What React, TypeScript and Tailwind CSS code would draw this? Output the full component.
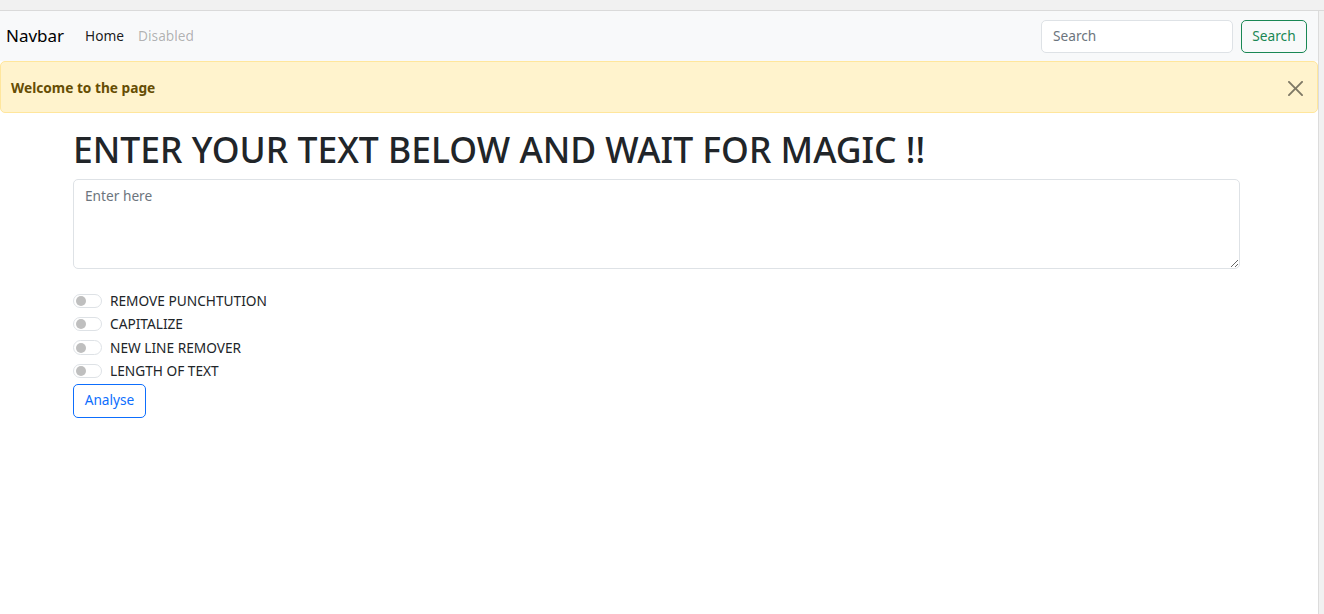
import React from "react";

const font = "font-['Segoe_UI','Noto_Sans',sans-serif]";

function Switch({ label }: { label: string }) {
  return (
    <div className="flex items-center h-[21.6px] mb-[1.8px]">
      <span className="relative w-[29px] h-[14.4px] rounded-full border border-[#dee2e6] bg-white shrink-0">
        <span className="absolute left-[2px] top-[1.2px] w-[10px] h-[10px] rounded-full bg-[#bfbfbf]" />
      </span>
      <span className="ml-[8px] text-[13.7px] text-[#212529] leading-[21.6px]">{label}</span>
    </div>
  );
}

export default function App() {
  return (
    <div className={`w-full h-screen flex flex-col bg-white overflow-hidden ${font}`}>
      <div className="h-[11px] shrink-0 bg-[#f1f1f1] border-b border-[#dadada]" />
      <div className="flex flex-1 min-h-0">
        <div className="flex-1 min-w-0 bg-white">
          {/* Navbar */}
          <nav className="h-[50px] bg-[#f8f9fa] flex items-center pl-[6px] pr-[11px]">
            <span className="text-[17px] text-black mr-[14px]">Navbar</span>
            <span className="px-[7px] text-[13.7px] text-black/90">Home</span>
            <span className="px-[7px] text-[13.7px] text-black/30">Disabled</span>
            <div className="flex-1" />
            <div className="h-[33px] w-[192px] mr-[8px] rounded-[5px] border border-[#dee2e6] bg-white flex items-center px-[11px] text-[13.7px] text-[#6c757d]">
              Search
            </div>
            <button className="h-[33px] w-[66px] rounded-[5px] border border-[#198754] text-[#198754] text-[13.7px] bg-transparent">
              Search
            </button>
          </nav>
          {/* Alert */}
          <div className="h-[52px] bg-[#fff3cd] border border-[#ffe69c] rounded-[5px] flex items-center justify-between pl-[10px] pr-[14px]">
            <span className="text-[13.7px] font-bold text-[#664d03] pt-[2px]">Welcome to the page</span>
            <svg width="15" height="15" viewBox="0 0 16 16" className="opacity-50 mt-[2px]">
              <path
                fill="#000"
                d="M.293.293a1 1 0 0 1 1.414 0L8 6.586 14.293.293a1 1 0 1 1 1.414 1.414L9.414 8l6.293 6.293a1 1 0 0 1-1.414 1.414L8 9.414l-6.293 6.293a1 1 0 0 1-1.414-1.414L6.586 8 .293 1.707a1 1 0 0 1 0-1.414z"
              />
            </svg>
          </div>
          {/* Main */}
          <div className="pl-[73px] pr-[78px] pt-[15px]">
            <h1 className="text-[35.5px] leading-[43px] font-medium text-[#212529] mb-[8px]">
              ENTER YOUR TEXT BELOW AND WAIT FOR MAGIC !!
            </h1>
            <textarea
              className="block w-full h-[90px] rounded-[5px] border border-[#dee2e6] px-[11px] py-[6px] text-[13.7px] text-[#212529] placeholder:text-[#6c757d] outline-none resize-y"
              placeholder="Enter here"
            />
            <div className="mt-[21px]">
              <Switch label="REMOVE PUNCHTUTION" />
              <Switch label="CAPITALIZE" />
              <Switch label="NEW LINE REMOVER" />
              <Switch label="LENGTH OF TEXT" />
            </div>
            <button className="h-[34px] w-[73px] rounded-[5px] border border-[#0d6efd] text-[#0d6efd] text-[13.7px] bg-transparent">
              Analyse
            </button>
          </div>
        </div>
        <div className="w-[6px] shrink-0 bg-[#f1f1f1] border-l border-[#dcdcdc]" />
      </div>
    </div>
  );
}
